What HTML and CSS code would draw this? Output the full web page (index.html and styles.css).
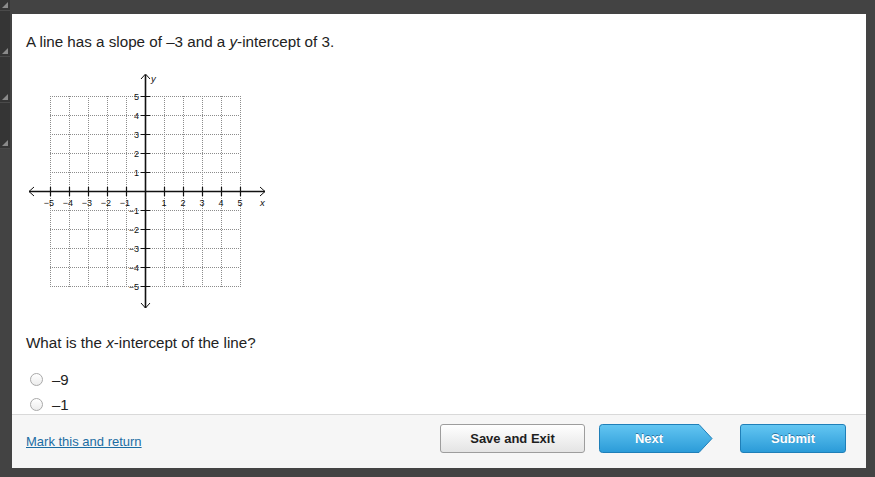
FILE: index.html
```html
<!DOCTYPE html>
<html>
<head>
<meta charset="utf-8">
<link rel="stylesheet" href="styles.css">
</head>
<body>
<div class="screen">
  <div class="strip">
    <div class="seg s1"><span class="grip"></span></div>
    <div class="seg"><span class="grip"></span></div>
    <div class="seg"><span class="grip"></span></div>
    <div class="seg"><span class="grip"></span></div>
  </div>
  <div class="panel">
    <div class="content">
      <p class="q">A line has a slope of –3 and a <i>y</i>-intercept of 3.</p>
      <svg class="graph" width="262" height="250" viewBox="12 66 262 250" xmlns="http://www.w3.org/2000/svg">
        <path class="grid" d="M50 96.5H240M50 115.5H240M50 134.5H240M50 153.5H240M50 172.5H240M50 210.5H240M50 229.5H240M50 248.5H240M50 267.5H240M50 286.5H240M50.5 96V287M69.5 96V287M88.5 96V287M107.5 96V287M126.5 96V287M164.5 96V287M183.5 96V287M202.5 96V287M221.5 96V287M240.5 96V287"/>
        <path class="axis" d="M29 191.5H265M145.5 75V308"/>
        <path class="arrow" d="M34 187L29 191.5L34 196M260 187L265 191.5L260 196M141 79L145.5 74L150 79M141 303L145.5 308L150 303"/>
        <path class="tick" d="M50.5 187V196M69.5 187V196M88.5 187V196M107.5 187V196M126.5 187V196M164.5 187V196M183.5 187V196M202.5 187V196M221.5 187V196M240.5 187V196M141 96.5H150M141 115.5H150M141 134.5H150M141 153.5H150M141 172.5H150M141 210.5H150M141 229.5H150M141 248.5H150M141 267.5H150M141 286.5H150"/>
        <g class="lbl xl">
          <text x="49" y="206">−5</text>
          <text x="68" y="206">−4</text>
          <text x="87" y="206">−3</text>
          <text x="106" y="206">−2</text>
          <text x="125" y="206">−1</text>
          <text x="164" y="206">1</text>
          <text x="183" y="206">2</text>
          <text x="202" y="206">3</text>
          <text x="221" y="206">4</text>
          <text x="240" y="206">5</text>
        </g>
        <g class="lbl yl">
          <text x="139" y="99.5">5</text>
          <text x="139" y="118.5">4</text>
          <text x="139" y="137.5">3</text>
          <text x="139" y="156.5">2</text>
          <text x="139" y="175.5">1</text>
          <text x="139" y="213.5">−1</text>
          <text x="139" y="232.5">−2</text>
          <text x="139" y="251.5">−3</text>
          <text x="139" y="270.5">−4</text>
          <text x="139" y="289.5">−5</text>
        </g>
        <text class="lbl var" x="151" y="82">y</text>
        <text class="lbl var" x="260" y="206">x</text>
      </svg>
      <p class="q q2">What is the <i>x</i>-intercept of the line?</p>
      <ul class="options">
        <li><span class="radio"></span><span class="opt">–9</span></li>
        <li><span class="radio"></span><span class="opt">–1</span></li>
      </ul>
    </div>
    <div class="footer">
      <a class="mark" href="#">Mark this and return</a>
      <div class="buttons">
        <button class="btn save">Save and Exit</button>
        <button class="btn next">
          <svg class="next-bg" width="114" height="29" viewBox="0 0 114 29" xmlns="http://www.w3.org/2000/svg">
            <defs>
              <linearGradient id="nb" x1="0" y1="0" x2="0" y2="1">
                <stop offset="0" stop-color="#63c6f2"/>
                <stop offset="1" stop-color="#2b9bd8"/>
              </linearGradient>
            </defs>
            <path d="M3.5 0.5H100L113 14.5L100 28.5H3.5Q0.5 28.5 0.5 25.5V3.5Q0.5 0.5 3.5 0.5Z" fill="url(#nb)" stroke="#1f7fb8"/>
          </svg>
          <span class="next-label">Next</span>
        </button>
        <button class="btn submit">Submit</button>
      </div>
    </div>
  </div>
</div>
</body>
</html>
```
FILE: styles.css
```css
html, body {
  margin: 0;
  padding: 0;
}
body {
  background: #434343;
  font-family: "Liberation Sans", Arial, Helvetica, sans-serif;
  color: #222;
}
.screen {
  display: flex;
  width: 875px;
  height: 477px;
  overflow: hidden;
}
.strip {
  width: 10px;
  background: #353535;
  flex: none;
  display: flex;
  flex-direction: column;
  align-self: flex-start;
}
.seg {
  height: 46px;
  position: relative;
  border-bottom: 1px solid #4a4a4a;
  box-sizing: border-box;
}
.seg.s1 {
  height: 11px;
}
.grip {
  position: absolute;
  right: 2px;
  bottom: 2px;
  width: 0;
  height: 0;
  border-left: 6px solid transparent;
  border-bottom: 6px solid #8a8a8a;
}
.panel {
  flex: none;
  width: 854px;
  height: 454px;
  margin: 14px 0 0 2px;
  background: #fff;
  display: flex;
  flex-direction: column;
}
.content {
  flex: none;
  height: 400px;
  overflow: hidden;
  padding: 19px 14px 0;
  box-sizing: border-box;
}
.q {
  margin: 0;
  font-size: 15.2px;
  line-height: 18px;
  color: #222;
}
.q i {
  font-style: italic;
}
.graph {
  display: block;
  margin: 15px 0 0 -14px;
}
.grid {
  stroke: #8c8c8c;
  stroke-width: 1;
  stroke-dasharray: 1 1;
  fill: none;
  shape-rendering: crispEdges;
}
.axis {
  stroke: #111;
  stroke-width: 1.6;
  fill: none;
}
.arrow {
  stroke: #111;
  stroke-width: 1;
  fill: none;
}
.tick {
  stroke: #111;
  stroke-width: 1.2;
  fill: none;
}
.lbl {
  font-family: "Liberation Sans", Arial, sans-serif;
  font-size: 9px;
  fill: #111;
}
.xl text {
  text-anchor: middle;
}
.yl text {
  text-anchor: end;
}
.var {
  font-style: italic;
  font-size: 9.5px;
}
.q2 {
  margin-top: 18px;
}
.options {
  list-style: none;
  margin: 15px 0 0;
  padding: 0;
}
.options li {
  height: 25px;
  display: flex;
  align-items: center;
  font-size: 15px;
}
.radio {
  width: 13px;
  height: 13px;
  box-sizing: border-box;
  border: 1px solid #a9a9a9;
  border-radius: 50%;
  background: linear-gradient(#ffffff, #ececec);
  margin-left: 4px;
  margin-right: 9px;
  flex: none;
}
.opt {
  line-height: 18px;
}
.footer {
  flex: none;
  height: 54px;
  box-sizing: border-box;
  border-top: 1px solid #d9d9d9;
  background: #f6f6f6;
  display: flex;
  align-items: center;
  padding: 0 20px 1px 14px;
}
.mark {
  font-size: 13px;
  color: #1b6da3;
  text-decoration: underline;
  margin-top: 1px;
}
.buttons {
  margin-left: auto;
  margin-bottom: 6px;
  display: flex;
  align-items: center;
}
.btn {
  font-family: "Liberation Sans", Arial, Helvetica, sans-serif;
  font-weight: bold;
  font-size: 13px;
  height: 29px;
  padding: 0;
  cursor: pointer;
  box-sizing: border-box;
}
.save {
  width: 145px;
  border: 1px solid #9d9d9d;
  border-radius: 3px;
  background: linear-gradient(#ffffff, #e4e4e4);
  color: #1e1e1e;
}
.next {
  width: 114px;
  margin-left: 14px;
  border: none;
  background: none;
  position: relative;
  color: #fff;
  padding-right: 14px;
  text-shadow: 0 -1px 0 rgba(0, 40, 80, 0.45);
}
.next-bg {
  position: absolute;
  left: 0;
  top: 0;
}
.next-label {
  position: relative;
}
.submit {
  width: 106px;
  margin-left: 27px;
  border: 1px solid #1f7fb8;
  border-radius: 3px;
  background: linear-gradient(#63c6f2, #2b9bd8);
  color: #fff;
  text-shadow: 0 -1px 0 rgba(0, 40, 80, 0.45);
}
```
